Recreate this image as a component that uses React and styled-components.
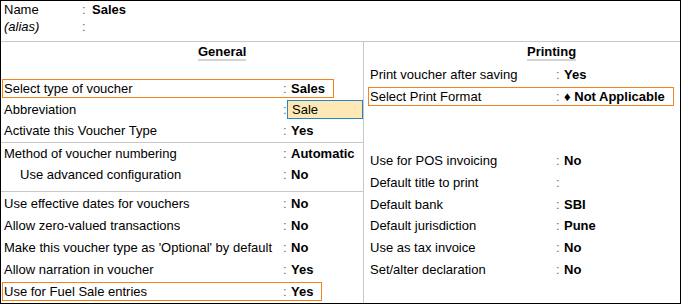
import styled, { createGlobalStyle } from "styled-components";

const GlobalStyle = createGlobalStyle`
    body {
        margin: 0;
        background: #ffffff;
        font-family: "Liberation Sans", Arial, sans-serif;
        font-size: 13px;
        color: #000000;
    }
`;

const general = [
    {
        rows: [
            { label: "Select type of voucher", value: "Sales", highlight: true },
            { label: "Abbreviation", value: "Sale", input: true },
            { label: "Activate this Voucher Type", value: "Yes" },
        ],
        h: 21,
        pad: 1,
    },
    {
        rows: [
            { label: "Method of voucher numbering", value: "Automatic" },
            { label: "Use advanced configuration", value: "No", indent: true },
        ],
        h: 21,
        pad: 6,
    },
    {
        rows: [
            { label: "Use effective dates for vouchers", value: "No" },
            { label: "Allow zero-valued transactions", value: "No" },
            { label: "Make this voucher type as 'Optional' by default", value: "No" },
            { label: "Allow narration in voucher", value: "Yes" },
            { label: "Use for Fuel Sale entries", value: "Yes", highlight: true },
        ],
        h: 22,
        pad: 0,
        last: true,
    },
];

const printing = [
    { label: "Use for POS invoicing", value: "No" },
    { label: "Default title to print", value: "" },
    { label: "Default bank", value: "SBI" },
    { label: "Default jurisdiction", value: "Pune" },
    { label: "Use as tax invoice", value: "No" },
    { label: "Set/alter declaration", value: "No" },
];

const Field = ({ row, labelWidth, h }) => (
    <Row $h={h} $side={labelWidth > 250 ? 1 : 4}>
        <Line $highlight={row.highlight}>
            <Label $w={labelWidth} $indent={row.indent}>
                {row.label}
            </Label>
            <Colon>:</Colon>
            {row.input ? (
                <Input>{row.value}</Input>
            ) : (
                <Value>{row.value}</Value>
            )}
        </Line>
    </Row>
);

const App = () => {
    return (
        <>
            <GlobalStyle />
            <Frame>
                <Header>
                    <HeaderRow>
                        <HeaderLabel>Name</HeaderLabel>
                        <HeaderColon>:</HeaderColon>
                        <HeaderValue>Sales</HeaderValue>
                    </HeaderRow>
                    <HeaderRow>
                        <HeaderLabel $italic>(alias)</HeaderLabel>
                        <HeaderColon>:</HeaderColon>
                    </HeaderRow>
                </Header>
                <Body>
                    <LeftPanel>
                        <Title $indent={197}>
                            <span>General</span>
                        </Title>
                        <Groups>
                            {general.map((group, i) => (
                                <Group key={i} $pad={group.pad} $last={group.last}>
                                    {group.rows.map((row) => (
                                        <Field
                                            key={row.label}
                                            row={row}
                                            labelWidth={279}
                                            h={group.h}
                                        />
                                    ))}
                                </Group>
                            ))}
                        </Groups>
                    </LeftPanel>
                    <RightPanel>
                        <Title $indent={163}>
                            <span>Printing</span>
                        </Title>
                        <PrintTop>
                            <Field
                                row={{ label: "Print voucher after saving", value: "Yes" }}
                                labelWidth={186}
                                h={22}
                            />
                            <Field
                                row={{
                                    label: "Select Print Format",
                                    value: "\u2666 Not Applicable",
                                    highlight: true,
                                }}
                                labelWidth={186}
                                h={22}
                            />
                        </PrintTop>
                        <PrintBottom>
                            {printing.map((row) => (
                                <Field
                                    key={row.label}
                                    row={row}
                                    labelWidth={186}
                                    h={21.7}
                                />
                            ))}
                        </PrintBottom>
                    </RightPanel>
                </Body>
            </Frame>
        </>
    );
};

const Frame = styled.div`
    width: 681px;
    height: 304px;
    box-sizing: border-box;
    border: 1px solid #000000;
    display: flex;
    flex-direction: column;
    overflow: hidden;
`;

const Header = styled.div`
    height: 40px;
    padding-left: 3px;
    border-bottom: 1px solid #c8c8c8;
    flex-shrink: 0;
`;

const HeaderRow = styled.div`
    display: flex;
    align-items: center;
    height: 17px;
`;

const HeaderLabel = styled.span`
    width: 78px;
    font-style: ${(p) => (p.$italic ? "italic" : "normal")};
`;

const HeaderColon = styled.span`
    width: 4px;
    color: #6a6a6a;
`;

const HeaderValue = styled.span`
    padding-left: 6px;
    font-weight: bold;
`;

const Body = styled.div`
    flex: 1;
    display: flex;
    min-height: 0;
`;

const LeftPanel = styled.div`
    width: 362px;
    border-right: 1px solid #c8c8c8;
    display: flex;
    flex-direction: column;
`;

const RightPanel = styled.div`
    flex: 1;
    display: flex;
    flex-direction: column;
`;

const Title = styled.div`
    padding: 2px 0 0 ${(p) => p.$indent}px;
    span {
        display: inline-block;
        line-height: 15px;
        font-weight: bold;
        border-bottom: 2px solid #d4d4d4;
    }
`;

const Groups = styled.div`
    margin-top: 17px;
    display: flex;
    flex-direction: column;
`;

const Group = styled.div`
    padding-bottom: ${(p) => p.$pad}px;
    border-bottom: ${(p) => (p.$last ? "none" : "1px solid #c8c8c8")};
`;

const Row = styled.div`
    height: ${(p) => p.$h}px;
    display: flex;
    align-items: center;
    padding-left: ${(p) => p.$side}px;
`;

const Line = styled.div`
    display: inline-flex;
    align-items: center;
    height: 19px;
    box-sizing: border-box;
    padding: 0 8px 0 1px;
    border: 1px solid ${(p) => (p.$highlight ? "#f58220" : "transparent")};
    white-space: nowrap;
`;

const Label = styled.span`
    width: ${(p) => p.$w - (p.$indent ? 16 : 0)}px;
    padding-left: ${(p) => (p.$indent ? 16 : 0)}px;
`;

const Colon = styled.span`
    width: 4px;
    color: #6a6a6a;
`;

const Value = styled.span`
    padding-left: 4px;
    font-weight: bold;
`;

const Input = styled.span`
    width: 76px;
    height: 19px;
    box-sizing: border-box;
    margin-right: -9px;
    padding-left: 4px;
    line-height: 17px;
    background: #fde8b6;
    border: 1px solid #2585c7;
`;

const PrintTop = styled.div`
    margin-top: 2px;
`;

const PrintBottom = styled.div`
    margin-top: 43px;
`;

export default App;
